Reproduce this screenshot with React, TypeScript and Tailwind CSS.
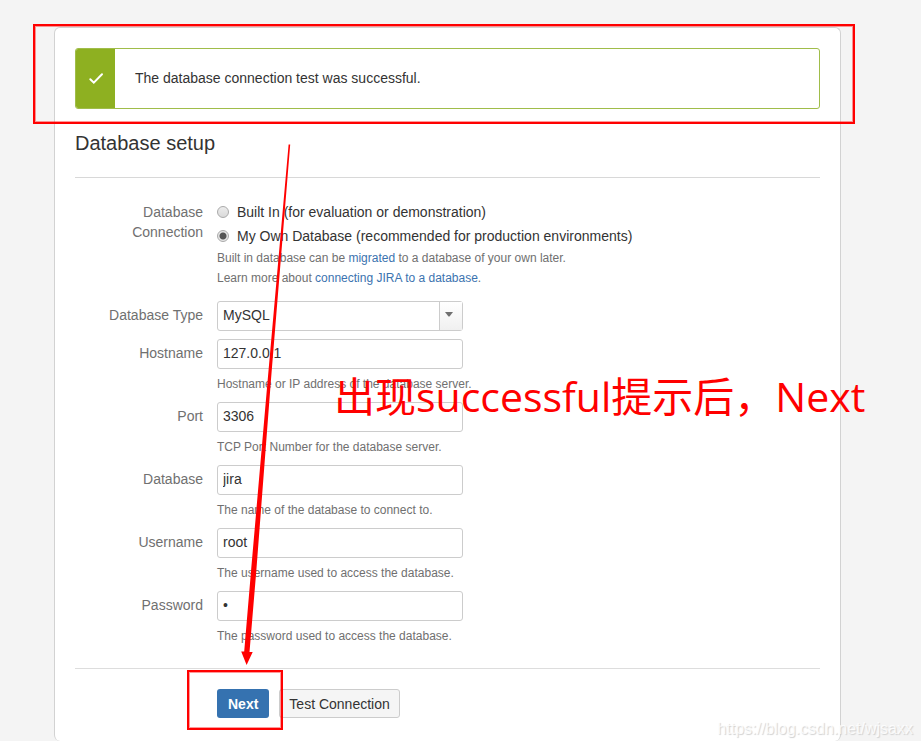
import React from "react"

interface FieldProps {
  id: string
  label: string
  value: string
  hint: string
  type?: string
}

const Field: React.FC<FieldProps> = ({ id, label, value, hint, type = "text" }) => (
  <div className="flex gap-3.5 pb-2">
    <label htmlFor={id} className="w-32 shrink-0 pt-1 text-right text-[#707070]">
      {label}
    </label>
    <div className="min-w-0 flex-1">
      <input
        id={id}
        type={type}
        defaultValue={value}
        className="block h-[30px] w-full max-w-[246px] rounded-[3px] border border-[#ccc] bg-white px-[5px] pb-0.5 text-[#333] outline-none"
      />
      <p className="pt-[5px] text-xs leading-5 text-[#707070]">{hint}</p>
    </div>
  </div>
)

interface RadioProps {
  id: string
  label: string
  checked?: boolean
}

const Radio: React.FC<RadioProps> = ({ id, label, checked }) => (
  <div className="flex h-6 items-center gap-2">
    <input
      id={id}
      type="radio"
      name="connection"
      defaultChecked={checked}
      className="size-3 shrink-0 appearance-none rounded-full border border-[#aaa] bg-linear-to-b from-[#ececec] to-[#dadada] checked:bg-[radial-gradient(circle,#555_0_3px,#e6e6e6_4px)]"
    />
    <label htmlFor={id} className="text-[#333]">
      {label}
    </label>
  </div>
)

// Red marks drawn over the form
const Annotations: React.FC = () => (
  <div className="pointer-events-none absolute inset-0 text-[#f00]">
    <div className="absolute -top-1 -right-[15px] -left-[22px] h-[100px] border-2 border-[#f00] inset-ring inset-ring-[#f00]/40" />
    <svg
      className="absolute top-[115px] left-[184px]"
      width="52"
      height="524"
      viewBox="0 0 52 524"
      fill="currentColor"
    >
      <path d="M49.6 1.5 51.2 1.5 31.8 239 17.3 428 10.500 509 13.7 509 7.6 522 2.2 508.500 5.2 508.500 12.2 426 28.500 239Z" />
    </svg>
    <p
      lang="zh-CN"
      className="absolute top-[338px] left-[279px] font-['Open_Sans','Noto_Sans_CJK_SC',sans-serif] text-[41px] leading-[60px] whitespace-nowrap"
    >
      出现successful提示后，Next
    </p>
    <div className="absolute top-[642px] left-[132px] h-[60px] w-24 border-2 border-[#f00] inset-ring inset-ring-[#f00]/40" />
  </div>
)

const App: React.FC = () => {
  return (
    <div className="relative bg-[#f4f4f4] pt-[27px] pr-20 pl-[54px] font-['Liberation_Sans',Arial,sans-serif] text-sm leading-5 text-[#333]">
      <main className="relative rounded-md border border-b-0 border-[#d2d2d2] bg-white px-5 pt-5 pb-[23px]">
        <div className="flex h-[61px] items-stretch overflow-hidden rounded-[3px] border border-[#a0bd4a]">
          <div className="flex w-[39px] items-center justify-center bg-[#8eb021]">
            <svg width="16" height="16" viewBox="0 0 16 16" fill="none" stroke="white" strokeWidth="2">
              <path d="M2.300 8.200 5.800 11.600 14 3.300" strokeLinecap="round" />
            </svg>
          </div>
          <p className="flex items-center px-5 pb-0.5">The database connection test was successful.</p>
        </div>

        <h1 className="border-b border-[#d8d8d8] pt-[22px] pb-[22px] text-xl leading-6">Database setup</h1>

        <form className="pt-[22px]" onSubmit={(e) => e.preventDefault()}>
          <fieldset className="flex gap-3.5 pb-[13px]">
            <legend className="float-left w-32 shrink-0 pt-0.5 text-right text-[#707070]">
              Database
              <br />
              Connection
            </legend>
            <div>
              <Radio id="builtin" label="Built In (for evaluation or demonstration)" />
              <Radio id="own" label="My Own Database (recommended for production environments)" checked />
              <p className="text-xs leading-5 text-[#707070]">
                Built in database can be{" "}
                <a href="#migrate" className="text-[#3b73af]">
                  migrated
                </a>{" "}
                to a database of your own later.
                <br />
                Learn more about{" "}
                <a href="#connect" className="text-[#3b73af]">
                  connecting JIRA to a database
                </a>
                .
              </p>
            </div>
          </fieldset>

          <div className="flex gap-3.5 pb-2">
            <label htmlFor="dbtype" className="w-32 shrink-0 pt-1 text-right text-[#707070]">
              Database Type
            </label>
            <div className="relative h-[30px] max-w-[246px] flex-1">
              <select
                id="dbtype"
                className="block h-full w-full appearance-none rounded-[3px] border border-[#ccc] bg-white px-[5px] pb-0.5 text-[#333]"
              >
                <option>MySQL</option>
              </select>
              <span className="pointer-events-none absolute inset-y-px right-px flex w-[23px] items-center justify-center border-l border-[#ccc] bg-linear-to-b from-white to-[#f0f0f0] pr-1 pb-1">
                <svg width="8" height="5" viewBox="0 0 8 5" fill="#707070">
                  <path d="M0 0h8L4.500 4.500h-1Z" />
                </svg>
              </span>
            </div>
          </div>

          <Field id="hostname" label="Hostname" value="127.0.0.1" hint="Hostname or IP address of the database server." />
          <Field id="port" label="Port" value="3306" hint="TCP Port Number for the database server." />
          <Field id="database" label="Database" value="jira" hint="The name of the database to connect to." />
          <Field id="username" label="Username" value="root" hint="The username used to access the database." />
          <Field
            id="password"
            label="Password"
            value="1"
            hint="The password used to access the database."
            type="password"
          />

          <div className="mt-[14px] flex gap-2.5 border-t border-[#ddd] pt-5 pl-[142px]">
            <button type="submit" className="h-[29px] rounded-[3px] bg-[#3572b0] px-[11px] font-bold text-white">
              Next
            </button>
            <button type="button" className="h-[29px] rounded-[3px] border border-[#ccc] bg-[#f5f5f5] px-[9px]">
              Test Connection
            </button>
          </div>
        </form>

        <Annotations />
      </main>
      <span className="absolute right-2 bottom-0 text-base leading-6 text-white/80 [text-shadow:1px_1px_1px_#d0d0d0]">
        https://blog.csdn.net/wjsaxx
      </span>
    </div>
  )
}

export default App
